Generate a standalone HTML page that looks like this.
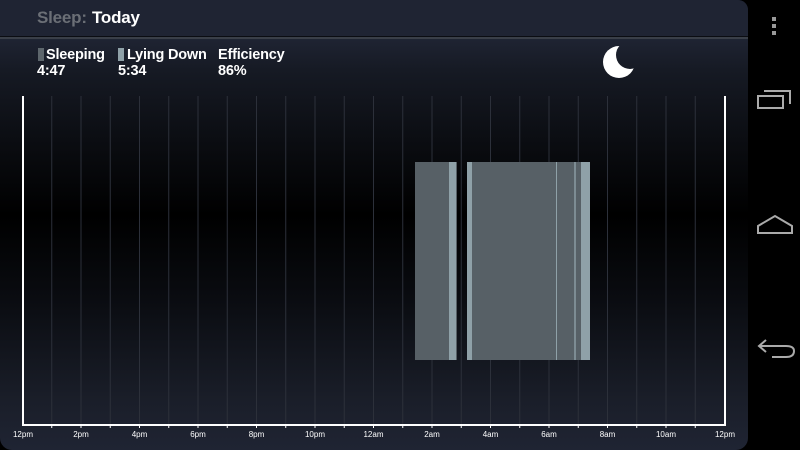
<!DOCTYPE html>
<html><head><meta charset="utf-8"><style>
html,body{margin:0;padding:0;width:800px;height:450px;overflow:hidden;background:#000;font-family:"Liberation Sans",sans-serif}
.panel{position:absolute;left:0;top:0;width:748px;height:450px;border-radius:0 10px 12px 12px;overflow:hidden;
background:linear-gradient(#1f2433 0,#1f2433 38px,#161a24 70px,#0b0d12 140px,#000 215px,#0a0c11 300px,#1a1e29 400px,#1f2433 450px)}
.hdr{position:absolute;left:0;top:0;width:748px;height:36px;background:#1f2433;border-bottom:1px solid #0b0d12}
.sep{position:absolute;left:0;top:37px;width:748px;height:2px;background:#3a3f48}
.t{position:absolute;font-weight:bold;color:#fff;letter-spacing:-0.2px}
</style></head><body>
<div class="panel">
<div class="hdr"></div><div class="sep"></div>
<div class="t" style="left:37px;top:8px;font-size:17px;color:#6b6f76">Sleep:</div>
<div class="t" style="left:92px;top:8px;font-size:17px">Today</div>
<div style="position:absolute;left:38px;top:48px;width:6px;height:13px;background:#5d666c"></div>
<div class="t" style="left:46px;top:47px;font-size:14.5px">Sleeping</div>
<div class="t" style="left:37px;top:63px;font-size:14.5px">4:47</div>
<div style="position:absolute;left:118px;top:48px;width:6px;height:13px;background:#8fa1a8"></div>
<div class="t" style="left:127px;top:47px;font-size:14.5px">Lying Down</div>
<div class="t" style="left:118px;top:63px;font-size:14.5px">5:34</div>
<div class="t" style="left:218px;top:47px;font-size:14.5px">Efficiency</div>
<div class="t" style="left:218px;top:63px;font-size:14.5px">86%</div>
<svg width="748" height="450" style="position:absolute;left:0;top:0">
<defs><mask id="m"><rect width="60" height="60" x="595" y="40" fill="#fff"/><circle cx="630" cy="55" r="14" fill="#000"/></mask></defs>
<circle cx="619" cy="62" r="16" fill="#fff" mask="url(#m)"/>
<g stroke="#2c303a" stroke-width="1">
<line x1="51.75" y1="96" x2="51.75" y2="425"/><line x1="81" y1="96" x2="81" y2="425"/><line x1="110.25" y1="96" x2="110.25" y2="425"/><line x1="139.5" y1="96" x2="139.5" y2="425"/><line x1="168.75" y1="96" x2="168.75" y2="425"/><line x1="198" y1="96" x2="198" y2="425"/><line x1="227.25" y1="96" x2="227.25" y2="425"/><line x1="256.5" y1="96" x2="256.5" y2="425"/><line x1="285.75" y1="96" x2="285.75" y2="425"/><line x1="315" y1="96" x2="315" y2="425"/><line x1="344.25" y1="96" x2="344.25" y2="425"/><line x1="373.5" y1="96" x2="373.5" y2="425"/><line x1="402.75" y1="96" x2="402.75" y2="425"/><line x1="432" y1="96" x2="432" y2="425"/><line x1="461.25" y1="96" x2="461.25" y2="425"/><line x1="490.5" y1="96" x2="490.5" y2="425"/><line x1="519.75" y1="96" x2="519.75" y2="425"/><line x1="549" y1="96" x2="549" y2="425"/><line x1="578.25" y1="96" x2="578.25" y2="425"/><line x1="607.5" y1="96" x2="607.5" y2="425"/><line x1="636.75" y1="96" x2="636.75" y2="425"/><line x1="666" y1="96" x2="666" y2="425"/><line x1="695.25" y1="96" x2="695.25" y2="425"/>
</g>
<rect x="415" y="162" width="42" height="198" fill="#576066"/>
<rect x="449" y="162" width="7" height="198" fill="#8fa1a8"/>
<rect x="467" y="162" width="123" height="198" fill="#576066"/>
<rect x="467" y="162" width="5" height="198" fill="#8fa1a8"/>
<rect x="556" y="162" width="1" height="198" fill="#8fa1a8"/>
<rect x="574" y="162" width="2" height="198" fill="#7d8c93"/>
<rect x="581" y="162" width="9" height="198" fill="#8fa1a8"/>
<g stroke="#fff" stroke-width="2" fill="none">
<polyline points="23,96 23,425 725,425 725,96"/>
</g>
<g stroke="#fff" stroke-width="1">
<line x1="51.75" y1="425" x2="51.75" y2="428"/><line x1="110.25" y1="425" x2="110.25" y2="428"/><line x1="168.75" y1="425" x2="168.75" y2="428"/><line x1="227.25" y1="425" x2="227.25" y2="428"/><line x1="285.75" y1="425" x2="285.75" y2="428"/><line x1="344.25" y1="425" x2="344.25" y2="428"/><line x1="402.75" y1="425" x2="402.75" y2="428"/><line x1="461.25" y1="425" x2="461.25" y2="428"/><line x1="519.75" y1="425" x2="519.75" y2="428"/><line x1="578.25" y1="425" x2="578.25" y2="428"/><line x1="636.75" y1="425" x2="636.75" y2="428"/><line x1="695.25" y1="425" x2="695.25" y2="428"/>
<line x1="81" y1="425" x2="81" y2="428"/><line x1="139.5" y1="425" x2="139.5" y2="428"/><line x1="198" y1="425" x2="198" y2="428"/><line x1="256.5" y1="425" x2="256.5" y2="428"/><line x1="315" y1="425" x2="315" y2="428"/><line x1="373.5" y1="425" x2="373.5" y2="428"/><line x1="432" y1="425" x2="432" y2="428"/><line x1="490.5" y1="425" x2="490.5" y2="428"/><line x1="549" y1="425" x2="549" y2="428"/><line x1="607.5" y1="425" x2="607.5" y2="428"/><line x1="666" y1="425" x2="666" y2="428"/>
</g>
<g fill="#fff" font-family="Liberation Sans, sans-serif" font-size="8" text-anchor="middle">
<text x="23" y="437">12pm</text><text x="81" y="437">2pm</text><text x="139.5" y="437">4pm</text><text x="198" y="437">6pm</text><text x="256.5" y="437">8pm</text><text x="315" y="437">10pm</text><text x="373.5" y="437">12am</text><text x="432" y="437">2am</text><text x="490.5" y="437">4am</text><text x="549" y="437">6am</text><text x="607.5" y="437">8am</text><text x="666" y="437">10am</text><text x="725" y="437">12pm</text>
</g>
</svg>
</div>
<svg width="52" height="450" style="position:absolute;left:748px;top:0">
<g fill="#999"><rect x="24" y="17" width="4" height="4"/><rect x="24" y="24" width="4" height="4"/><rect x="24" y="31" width="4" height="4"/></g>
<g stroke="#aaa" stroke-width="2" fill="none">
<rect x="10" y="96" width="25" height="12"/>
<polyline points="16,91 42,91 42,104"/>
<polygon points="10,233 10,226 27,216 44,226 44,233"/>
<path d="M18,340 L11,346 L18,352 M11,346 L38,346 Q46,346 46,351 Q46,357 38,357 L24,357"/>
</g>
</svg>
</body></html>
